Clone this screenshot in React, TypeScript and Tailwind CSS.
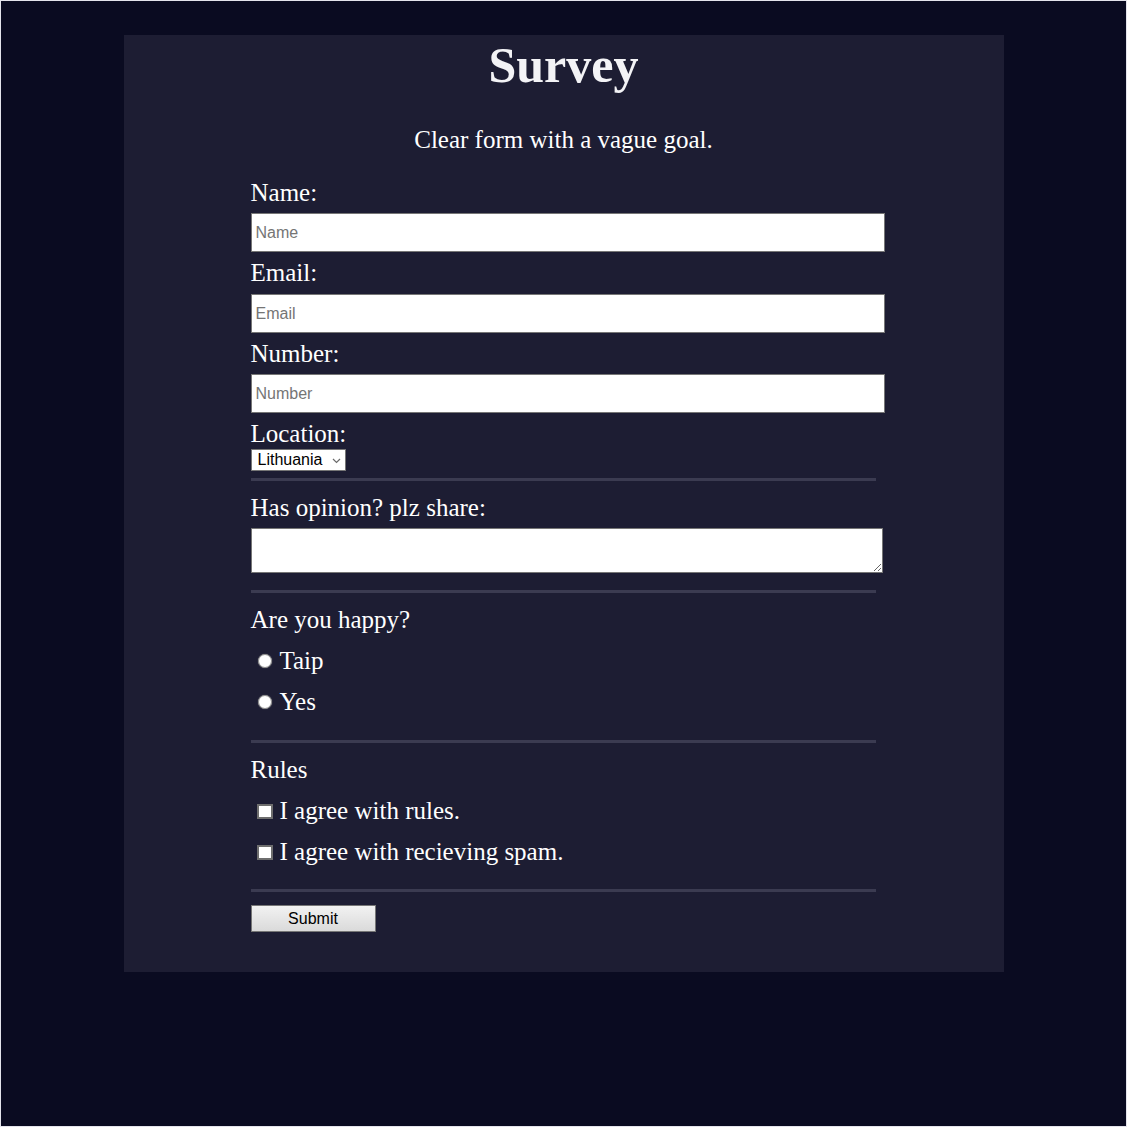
const serif = "font-['Liberation_Serif','Times_New_Roman',serif]"
const sans = "font-['Liberation_Sans',Arial,sans-serif]"

function Rule({ className }: { className: string }) {
  return <hr className={"w-[625px] h-[3px] border-0 bg-[#3b3b51] " + className} />
}

export default function App() {
  return (
    <div className={"h-[1127px] border border-[#e4e4ec] bg-[#0a0b21] pt-[34px] " + serif}>
      <div className="w-[880px] mx-auto bg-[#1d1d33] pt-[2px] pb-[40px] text-white">
        <h1 className="text-center text-[50px] leading-[56px] font-bold text-[#f3f3f6]">Survey</h1>
        <p className="mt-[33px] text-center text-[25px] leading-[28px]">Clear form with a vague goal.</p>

        <form className="pl-[127px] flex flex-col items-start text-[25px] leading-[28px]">
          <label htmlFor="name" className="mt-[25px]">Name:</label>
          <input
            id="name"
            type="text"
            placeholder="Name"
            className={"mt-[6px] w-[634px] h-[39px] bg-white border border-[#767676] pl-[4px] text-[16px] text-black placeholder:text-[#757575] " + sans}
          />

          <label htmlFor="email" className="mt-[7px]">Email:</label>
          <input
            id="email"
            type="email"
            placeholder="Email"
            className={"mt-[7px] w-[634px] h-[39px] bg-white border border-[#767676] pl-[4px] text-[16px] text-black placeholder:text-[#757575] " + sans}
          />

          <label htmlFor="number" className="mt-[7px]">Number:</label>
          <input
            id="number"
            type="text"
            placeholder="Number"
            className={"mt-[6px] w-[634px] h-[39px] bg-white border border-[#767676] pl-[4px] text-[16px] text-black placeholder:text-[#757575] " + sans}
          />

          <label htmlFor="location" className="mt-[7px]">Location:</label>
          <div className="relative mt-[1px] flex">
            <select
              id="location"
              defaultValue="Lithuania"
              className={"appearance-none w-[95px] h-[22px] bg-white border border-[#767676] pl-[6px] text-[16px] leading-[20px] text-black " + sans}
            >
              <option>Lithuania</option>
              <option>Latvia</option>
              <option>Estonia</option>
            </select>
            <svg className="pointer-events-none absolute right-[5px] top-[9px]" width="9" height="6" viewBox="0 0 9 6">
              <path d="M1 1l3.5 3.5L8 1" fill="none" stroke="#6b6b6b" strokeWidth="1.2" />
            </svg>
          </div>

          <Rule className="mt-[7px]" />

          <label htmlFor="opinion" className="mt-[13px]">Has opinion? plz share:</label>
          <textarea id="opinion" className="mt-[6px] w-[632px] h-[45px] bg-white border border-[#767676] text-black" />

          <Rule className="mt-[17px]" />

          <p className="mt-[13px]">Are you happy?</p>
          {["Taip", "Yes"].map((opt) => (
            <label key={opt} className="mt-[13px] flex items-center">
              <input
                type="radio"
                name="happy"
                className="appearance-none ml-[7px] mr-[8px] w-[14px] h-[14px] rounded-full bg-white border border-[#8c8c8c] shadow-[0_0_1px_#999]"
              />
              {opt}
            </label>
          ))}

          <Rule className="mt-[24px]" />

          <p className="mt-[13px]">Rules</p>
          {["I agree with rules.", "I agree with recieving spam."].map((txt) => (
            <label key={txt} className="mt-[13px] flex items-center">
              <input
                type="checkbox"
                className="appearance-none ml-[6px] mr-[7px] w-[16px] h-[15px] bg-white border-2 border-[#6e6e6e]"
              />
              {txt}
            </label>
          ))}

          <Rule className="mt-[23px]" />

          <button
            type="submit"
            className={"mt-[13px] w-[125px] h-[27px] border border-[#767676] bg-gradient-to-b from-[#f2f2f2] to-[#dadada] text-[16px] leading-[20px] text-black " + sans}
          >
            Submit
          </button>
        </form>
      </div>
    </div>
  )
}
